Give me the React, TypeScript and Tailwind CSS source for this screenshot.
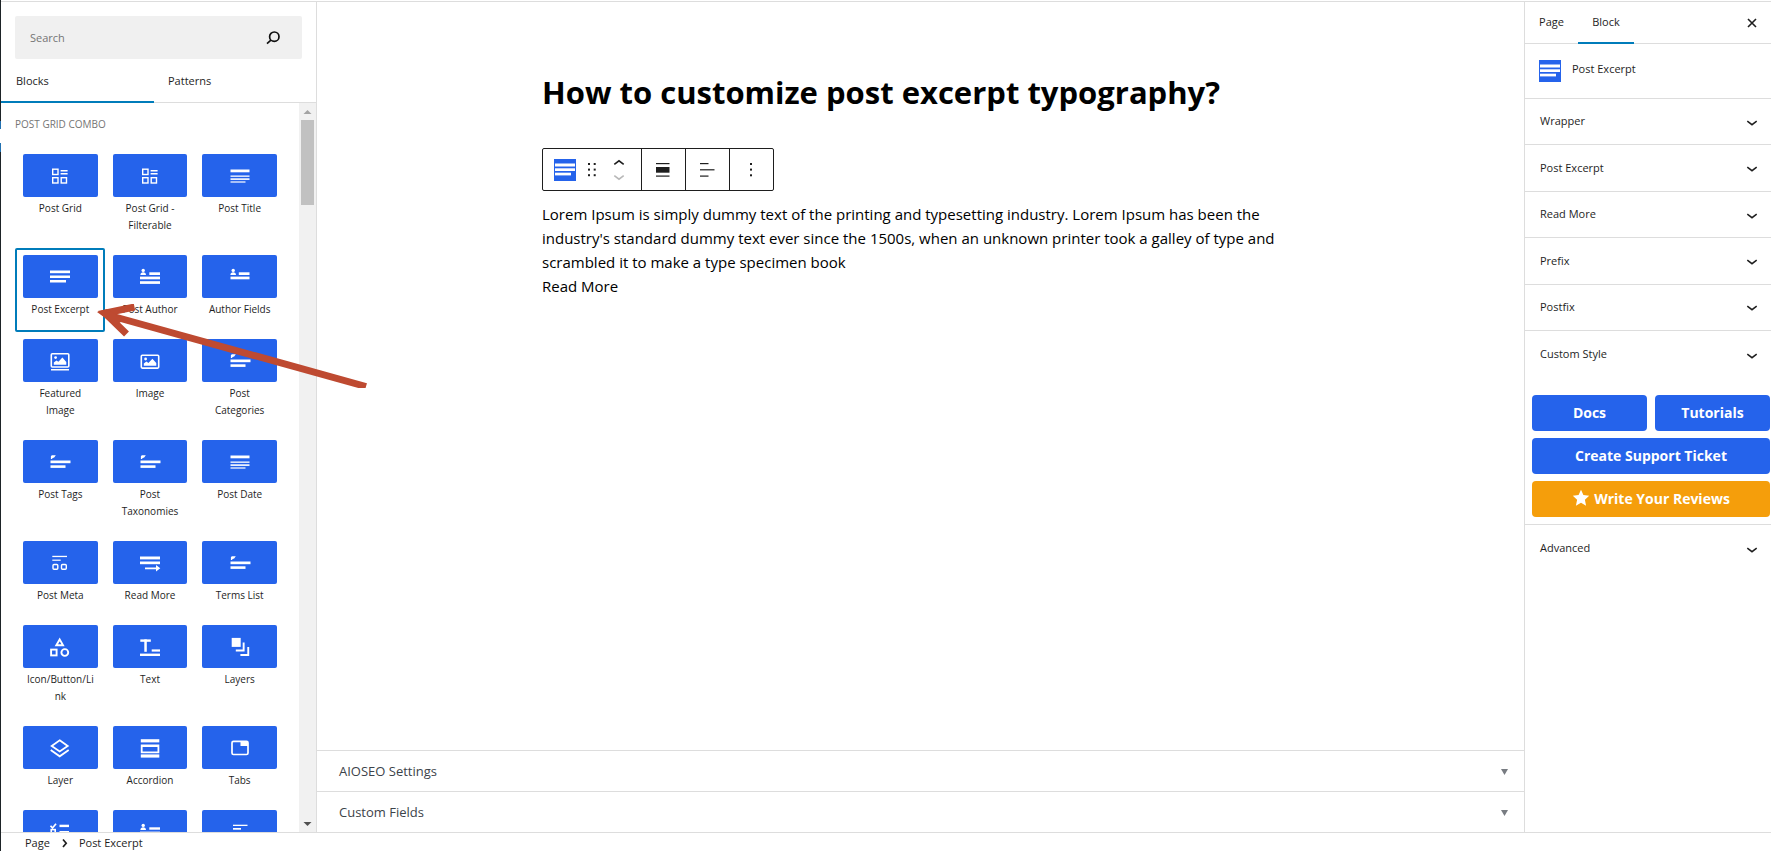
import React from "react";
import type { ReactNode } from "react";

type Block = { name: string; icon: ReactNode; iconOnly?: boolean };

const person = (
  <>
    <circle cx="5.2" cy="5.4" r="1.7" />
    <path d="M2.4 10c0-1.900 1.200-2.700 2.800-2.700S8 8.100 8 10z" />
  </>
);

const gridIcon = (
  <>
    <g fill="none" stroke="white" strokeWidth="1.4">
      <rect x="4.700" y="5.200" width="5.300" height="5.300" />
      <rect x="4.700" y="13.700" width="5.300" height="5.300" />
      <rect x="13.200" y="13.700" width="5.300" height="5.300" />
    </g>
    <rect x="12.600" y="6" width="7" height="1.500" />
    <rect x="12.600" y="9" width="7" height="1.500" />
  </>
);

const titleIcon = (
  <>
    <rect x="2.500" y="5.500" width="19" height="2.800" />
    <rect x="2.500" y="11.500" width="19" height="1.300" />
    <rect x="2.500" y="14.300" width="19" height="1.600" />
    <rect x="2.500" y="17.400" width="15" height="1.200" />
  </>
);

const tagIcon = (
  <>
    <path d="M2.900 8.900V6.200l.9-.9h4L6.200 7.600l-1.500.3-.8 1z" />
    <rect x="2.500" y="10.500" width="20" height="2.700" />
    <rect x="2.500" y="15.300" width="15" height="2.600" />
  </>
);

const blocks: Block[] = [
  { name: "Post Grid", icon: gridIcon },
  { name: "Post Grid - Filterable", icon: gridIcon },
  { name: "Post Title", icon: titleIcon },
  {
    name: "Post Excerpt",
    icon: (
      <>
        <rect x="2" y="5.500" width="20" height="2.700" />
        <rect x="2" y="10.500" width="20" height="2.500" />
        <rect x="2" y="15" width="16" height="2.500" />
      </>
    ),
  },
  {
    name: "Post Author",
    icon: (
      <>
        {person}
        <rect x="11.300" y="7.300" width="10.700" height="2.700" />
        <rect x="2" y="11.600" width="20" height="2.700" />
        <rect x="2" y="16.200" width="20" height="2.700" />
      </>
    ),
  },
  {
    name: "Author Fields",
    icon: (
      <>
        {person}
        <rect x="10.800" y="7.300" width="10.700" height="2.700" />
        <rect x="2.500" y="11.600" width="19" height="2.700" />
      </>
    ),
  },
  {
    name: "Featured Image",
    icon: (
      <>
        <rect x="3.300" y="4.800" width="17.500" height="13.200" rx="1" fill="none" stroke="white" strokeWidth="1.600" />
        <circle cx="7.600" cy="8.600" r="1.400" />
        <path d="M5.800 15.700v-2.200l2.600-2 2 1.300 4-4.200 3.900 4.300v2.800z" />
        <rect x="3" y="20" width="18" height="1.500" />
      </>
    ),
  },
  {
    name: "Image",
    icon: (
      <>
        <rect x="3.300" y="6.300" width="17.400" height="12.800" rx="1" fill="none" stroke="white" strokeWidth="1.600" />
        <circle cx="7.600" cy="10" r="1.400" />
        <path d="M5.800 16.800v-2.200l2.600-2 2 1.300 4-4.200 3.900 4.300v2.800z" />
      </>
    ),
  },
  { name: "Post Categories", icon: tagIcon },
  { name: "Post Tags", icon: tagIcon },
  { name: "Post Taxonomies", icon: tagIcon },
  { name: "Post Date", icon: titleIcon },
  {
    name: "Post Meta",
    icon: (
      <>
        <rect x="4.300" y="4.800" width="14.700" height="1.300" />
        <rect x="4.300" y="8.600" width="8.400" height="1.200" />
        <g fill="none" stroke="white" strokeWidth="1.400">
          <rect x="5" y="13.500" width="4.800" height="4.800" rx="1" />
          <rect x="13.500" y="13.500" width="4.800" height="4.800" rx="1" />
        </g>
      </>
    ),
  },
  {
    name: "Read More",
    icon: (
      <>
        <rect x="2" y="5.500" width="20" height="2.900" />
        <rect x="2" y="10.500" width="20" height="2.700" />
        <path d="M7 16.400h11V14l4.300 3.300L18 20.500v-2.300H7z" />
      </>
    ),
  },
  { name: "Terms List", icon: tagIcon },
  {
    name: "Icon/Button/Link",
    icon: (
      <g fill="none" stroke="white" strokeWidth="1.900">
        <path d="M11.700 4.400l3.300 5.800H8.300z" />
        <rect x="3.100" y="14.600" width="5.500" height="5.800" />
        <circle cx="16.800" cy="17.500" r="3.400" />
      </g>
    ),
  },
  {
    name: "Text",
    icon: (
      <>
        <rect x="2.300" y="4.400" width="10.500" height="2.400" />
        <rect x="6.300" y="4.400" width="2.500" height="12.400" />
        <rect x="13.700" y="14.400" width="8.300" height="2.200" />
        <rect x="2" y="18.600" width="20" height="2.400" />
      </>
    ),
  },
  {
    name: "Layers",
    icon: (
      <>
        <rect x="3.700" y="2.900" width="9" height="9" />
        <path d="M14.700 7.500h1.900v9H7.800v-1.900h6.900zM19.300 12h1.900v8.900h-8.800V19h6.900z" />
      </>
    ),
  },
  {
    name: "Layer",
    icon: (
      <g fill="none" stroke="white" strokeWidth="1.800">
        <path d="M11.700 4.300l8 5.600-8 5.600-8-5.600z" />
        <path d="M2.700 14l9 6.300 9-6.300" />
      </g>
    ),
  },
  {
    name: "Accordion",
    icon: (
      <>
        <rect x="2.800" y="3.200" width="18.500" height="3.200" />
        <path fillRule="evenodd" d="M2.800 8.400h18.500v8.800H2.800zM4.600 11v4.600h14.900V11z" />
        <rect x="2.800" y="18.400" width="18.500" height="3.200" />
      </>
    ),
  },
  {
    name: "Tabs",
    icon: (
      <>
        <rect x="4" y="5.300" width="16" height="13.200" rx="1.500" fill="none" stroke="white" strokeWidth="1.700" />
        <rect x="12.500" y="5.500" width="7.500" height="4.500" />
      </>
    ),
  },
  {
    name: "Checklist",
    iconOnly: true,
    icon: (
      <>
        <path d="M2.500 5.800l2 2.200L8 3.700" fill="none" stroke="white" strokeWidth="1.700" />
        <rect x="11.500" y="4.700" width="9.500" height="2.400" />
        <rect x="3.200" y="9.600" width="4" height="4" fill="none" stroke="white" strokeWidth="1.600" />
        <rect x="11.500" y="11" width="9.500" height="2.400" />
      </>
    ),
  },
  {
    name: "User Fields",
    iconOnly: true,
    icon: (
      <>
        {person}
        <rect x="11.300" y="7.300" width="10.700" height="2.400" />
        <rect x="2" y="11.600" width="20" height="2.700" />
      </>
    ),
  },
  {
    name: "Table of Contents",
    iconOnly: true,
    icon: (
      <>
        <rect x="5" y="4.700" width="14.500" height="1.300" />
        <rect x="5" y="8" width="8" height="1.700" />
        <rect x="5" y="12" width="14" height="1.500" />
      </>
    ),
  },
];

function BlockTile({ block, selected }: { block: Block; selected: boolean }) {
  return (
    <button
      type="button"
      aria-label={block.iconOnly ? block.name : undefined}
      className={
        "flex flex-col items-center rounded-xs pt-[7px] pr-[7px] pb-[14px] pl-2 " +
        (selected ? "outline-2 -outline-offset-2 outline-[#007cba]" : "")
      }
    >
      <span className="flex h-[43px] w-full items-center justify-center rounded-xs bg-[#2563eb]">
        <svg viewBox="0 0 24 24" className="size-6 fill-white" aria-hidden="true">
          {block.icon}
        </svg>
      </span>
      {!block.iconOnly && (
        <span className="mt-[3px] w-full px-[3px] text-center text-[10px] leading-[17px] break-words text-[#1e1e1e]">
          {block.name}
        </span>
      )}
    </button>
  );
}

function ExcerptIcon() {
  return (
    <svg viewBox="0 0 22 22" className="size-[22px] shrink-0" aria-hidden="true">
      <rect width="22" height="22" fill="#2563eb" />
      <g fill="white">
        <rect x="1" y="4.500" width="20" height="3" />
        <rect x="1" y="9.300" width="20" height="2.700" />
        <rect x="1" y="13.700" width="16" height="2.700" />
      </g>
    </svg>
  );
}

function Chevron() {
  return (
    <svg viewBox="0 0 12 8" className="mt-[2px] h-2 w-3" fill="none" stroke="#1e1e1e" strokeWidth="1.500" aria-hidden="true">
      <path d="M1.300 2.200L6 5.700l4.700-3.500" />
    </svg>
  );
}

function Inserter() {
  return (
    <aside className="flex w-[316px] shrink-0 flex-col border-r border-[#ddd]">
      <div className="mx-[14px] mt-[14px] flex h-[43px] shrink-0 items-center rounded-xs bg-[#f0f0f0]">
        <input
          type="search"
          aria-label="Search"
          placeholder="Search"
          className="min-w-0 flex-1 bg-transparent px-[15px] pt-[2px] text-[11px] outline-none placeholder:text-[#757575]"
        />
        <button type="button" aria-label="Search blocks" className="mr-[21px]">
          <svg viewBox="0 0 16 16" className="size-4" fill="none" stroke="#111" strokeWidth="1.700" aria-hidden="true">
            <circle cx="9.300" cy="6.700" r="4.700" />
            <path d="M5.900 10.200L2 13.600" />
          </svg>
        </button>
      </div>
      <div role="tablist" className="flex h-[44px] shrink-0 border-b border-[#ddd] text-[11px] font-medium text-[#1e1e1e]">
        <button type="button" role="tab" aria-selected="true" className="-mb-px w-[153px] border-b-2 border-[#007cba] pt-[2px] pl-[15px] text-left">
          Blocks
        </button>
        <button type="button" role="tab" aria-selected="false" className="pt-px pl-[14px] text-left">
          Patterns
        </button>
      </div>
      <div className="flex min-h-0 flex-1">
        <div className="min-w-0 flex-1 overflow-hidden pr-[15px] pl-[14px]">
          <h2 className="mt-[13px] mb-[14px] text-[10px] leading-[17px] font-medium text-[#757575]">POST GRID COMBO</h2>
          <div className="grid grid-cols-3">
            {blocks.map((block) => (
              <BlockTile key={block.name} block={block} selected={block.name === "Post Excerpt"} />
            ))}
          </div>
        </div>
        <div className="flex w-[17px] shrink-0 flex-col items-center justify-between bg-[#f1f1f1]">
          <div className="flex w-full flex-col items-center">
            <svg viewBox="0 0 17 17" className="size-[17px]" aria-hidden="true">
              <path d="M4.500 11h8l-4-4z" fill="#a3a3a3" />
            </svg>
            <div className="h-[85px] w-[13px] bg-[#c1c1c1]" />
          </div>
          <svg viewBox="0 0 17 17" className="size-[17px]" aria-hidden="true">
            <path d="M4.500 7h8l-4 4z" fill="#505050" />
          </svg>
        </div>
      </div>
    </aside>
  );
}

function Toolbar() {
  return (
    <div role="toolbar" aria-label="Block tools" className="flex h-[43px] w-fit divide-x divide-[#1e1e1e] rounded-xs border border-[#1e1e1e]">
      <div className="flex w-[99px] items-center pl-[11px]">
        <button type="button" aria-label="Post Excerpt">
          <ExcerptIcon />
        </button>
        <button type="button" aria-label="Drag" className="ml-[11px]">
          <svg viewBox="0 0 10 16" className="h-4 w-[10px] fill-[#1e1e1e]" aria-hidden="true">
            <rect x="1" y="1" width="2" height="2" />
            <rect x="6.700" y="1" width="2" height="2" />
            <rect x="1" y="6.600" width="2" height="2" />
            <rect x="6.700" y="6.600" width="2" height="2" />
            <rect x="1" y="12.200" width="2" height="2" />
            <rect x="6.700" y="12.200" width="2" height="2" />
          </svg>
        </button>
        <div className="ml-4 flex flex-col gap-2">
          <button type="button" aria-label="Move up">
            <svg viewBox="0 0 12 7" className="h-[7px] w-3" fill="none" stroke="#1e1e1e" strokeWidth="1.600" aria-hidden="true">
              <path d="M1.300 5.300L6 1.800l4.700 3.500" />
            </svg>
          </button>
          <button type="button" aria-label="Move down">
            <svg viewBox="0 0 12 7" className="h-[7px] w-3" fill="none" stroke="#b8b8b8" strokeWidth="1.600" aria-hidden="true">
              <path d="M1.300 1.700L6 5.200l4.700-3.500" />
            </svg>
          </button>
        </div>
      </div>
      <button type="button" aria-label="Align" className="flex w-[44px] items-center justify-center pr-px">
        <svg viewBox="0 0 16 16" className="size-4 fill-[#1e1e1e]" aria-hidden="true">
          <rect x="1" y="1" width="13.500" height="1.200" />
          <rect x="1" y="5" width="13.500" height="5.700" />
          <rect x="1" y="13.500" width="13.500" height="1.200" />
        </svg>
      </button>
      <button type="button" aria-label="Align text" className="flex w-[44px] items-center justify-center pr-px">
        <svg viewBox="0 0 16 16" className="size-4 fill-[#1e1e1e]" aria-hidden="true">
          <rect x="1" y="1" width="8.500" height="1.200" />
          <rect x="1" y="7.200" width="14.500" height="1.200" />
          <rect x="1" y="13.500" width="8.500" height="1.200" />
        </svg>
      </button>
      <button type="button" aria-label="Options" className="flex w-[43px] items-center justify-center pr-px">
        <svg viewBox="0 0 4 16" className="h-4 w-1 fill-[#1e1e1e]" aria-hidden="true">
          <rect x="1" y="1" width="2" height="2" />
          <rect x="1" y="6.600" width="2" height="2" />
          <rect x="1" y="12.300" width="2" height="2" />
        </svg>
      </button>
    </div>
  );
}

function MetaBox({ title }: { title: string }) {
  return (
    <button type="button" className="flex h-[41px] w-full items-center justify-between border-t border-[#ddd] pt-[2px] pr-4 pl-[22px] text-[13px] font-medium text-[#3c434a]">
      {title}
      <svg viewBox="0 0 7 6" className="h-[6px] w-[7px]" aria-hidden="true">
        <path d="M0 0h7L3.500 6z" fill="#787c82" />
      </svg>
    </button>
  );
}

function Editor() {
  return (
    <main className="flex min-w-0 flex-1 flex-col">
      <div className="flex-1 px-6">
        <article className="mx-auto max-w-[757px] text-black">
          <h1 className="pt-[68px] text-[31px] leading-[44px] font-bold">How to customize post excerpt typography?</h1>
          <div className="mt-[34px]">
            <Toolbar />
          </div>
          <div className="mt-[11px] text-[15px] leading-[24px]">
            <p>
              Lorem Ipsum is simply dummy text of the printing and typesetting industry. Lorem Ipsum has been the
              industry's standard dummy text ever since the 1500s, when an unknown printer took a galley of type and
              scrambled it to make a type specimen book
            </p>
            <a href="#read-more">Read More</a>
          </div>
        </article>
      </div>
      <MetaBox title="AIOSEO Settings" />
      <MetaBox title="Custom Fields" />
    </main>
  );
}

function Panel({ title }: { title: string }) {
  return (
    <button type="button" className="flex w-full flex-1 items-center justify-between border-b border-[#ddd] pr-[13px] pl-[15px] font-medium">
      {title}
      <Chevron />
    </button>
  );
}

function Settings() {
  return (
    <aside className="w-[247px] shrink-0 border-l border-[#ddd] text-[11px] text-[#1e1e1e]">
      <div role="tablist" className="flex h-[42px] items-stretch border-b border-[#ddd] font-medium">
        <button type="button" role="tab" aria-selected="false" className="w-[53px] text-center">
          Page
        </button>
        <button type="button" role="tab" aria-selected="true" className="-mb-px w-[56px] border-b-2 border-[#007cba] pt-px text-center">
          Block
        </button>
        <button type="button" aria-label="Close settings" className="mr-[13px] ml-auto">
          <svg viewBox="0 0 12 12" className="size-3" fill="none" stroke="#1e1e1e" strokeWidth="1.600" aria-hidden="true">
            <path d="M2 2l8 8M10 2l-8 8" />
          </svg>
        </button>
      </div>
      <div className="flex h-[55px] border-b border-[#ddd] pt-4 pl-[14px]">
        <ExcerptIcon />
        <h2 className="ml-[11px] leading-[18px] font-medium">Post Excerpt</h2>
      </div>
      <div className="flex h-[232px] flex-col">
        {["Wrapper", "Post Excerpt", "Read More", "Prefix", "Postfix"].map((title) => (
          <Panel key={title} title={title} />
        ))}
      </div>
      <button type="button" className="flex h-[47px] w-full items-center justify-between pr-[13px] pl-[15px] font-medium">
        Custom Style
        <Chevron />
      </button>
      <div className="grid grid-cols-2 gap-x-2 gap-y-[7px] border-b border-[#ddd] pt-[17px] pr-px pb-[7px] pl-[7px] text-center text-[14px] leading-[36px] font-bold text-white">
        <a href="#docs" className="rounded-sm bg-[#2563eb]">Docs</a>
        <a href="#tutorials" className="rounded-sm bg-[#2563eb]">Tutorials</a>
        <a href="#support" className="col-span-2 rounded-sm bg-[#2563eb]">Create Support Ticket</a>
        <a href="#reviews" className="col-span-2 flex items-center justify-center gap-1 rounded-sm bg-[#f59e0b]">
          <svg viewBox="0 0 18 18" className="mb-[3px] size-[18px] fill-white" aria-hidden="true">
            <path d="M9 .8l2.400 5.300 5.800.7-4.300 4 1.200 5.900L9 13.700l-5.100 3 1.200-5.900-4.300-4 5.800-.7z" />
          </svg>
          Write Your Reviews
        </a>
      </div>
      <button type="button" className="flex h-[47px] w-full items-center justify-between pr-[13px] pl-[15px] font-medium">
        Advanced
        <Chevron />
      </button>
    </aside>
  );
}

export default function App() {
  return (
    <div className="relative flex h-screen overflow-hidden bg-white font-['Open_Sans','Noto_Sans',sans-serif]">
      <div className="flex w-px shrink-0 flex-col">
        <div className="h-[121px] bg-[#1d2327]" />
        <div className="h-[8px] bg-[#2271b1]" />
        <div className="h-[14px] bg-white" />
        <div className="h-[9px] bg-[#2271b1]" />
        <div className="flex-1 bg-[#1d2327]" />
      </div>
      <div className="flex min-w-0 flex-1 flex-col pt-px">
        <div className="flex min-h-0 flex-1 border-y border-[#ddd]">
          <Inserter />
          <Editor />
          <Settings />
        </div>
        <nav aria-label="Block breadcrumb" className="flex h-[18px] shrink-0 items-start overflow-hidden pl-6 text-[11px] leading-[20px] text-[#1e1e1e]">
          <button type="button">Page</button>
          <svg viewBox="0 0 8 20" className="mr-[10px] ml-[11px] h-5 w-2" fill="none" stroke="#1e1e1e" strokeWidth="1.700" aria-hidden="true">
            <path d="M2 6.500l3.200 3.700L2 14" />
          </svg>
          <span>Post Excerpt</span>
        </nav>
      </div>
      <svg
        viewBox="0 0 272 84"
        className="pointer-events-none absolute top-[304px] left-[96px] h-[84px] w-[272px]"
        fill="none"
        stroke="#be4a31"
        strokeWidth="7"
        aria-hidden="true"
      >
        <path d="M270 82.500L12 11" />
        <path d="M38.500 3L9 9L30.500 30" strokeMiterlimit="10" />
        <path d="M1 8l10-3 18 11-10 5z" fill="#be4a31" stroke="none" />
      </svg>
    </div>
  );
}
